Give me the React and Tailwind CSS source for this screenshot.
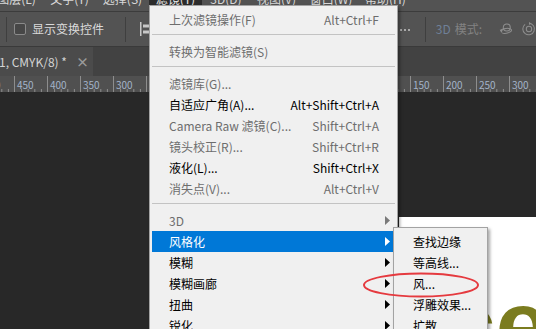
import React from 'react';

const topMenus = [
  { label: '图层(L)', w: 'w-[53px]' },
  { label: '文字(Y)', w: 'w-[53px]' },
  { label: '选择(S)', w: 'w-[53px]' },
  { label: '滤镜(T)', w: 'w-[53px]', open: true },
  { label: '3D(D)', w: 'w-[48px]' },
  { label: '视图(V)', w: 'w-[53px]' },
  { label: '窗口(W)', w: 'w-[56px]' },
  { label: '帮助(H)', w: 'w-[53px]' },
];

const rulerLabels = [500, 450, 400, 350, 300, 250, 200, 150, 100, 50, 0, 50, 100, 150, 200, 250, 300, 350];

const filterItems = [
  { label: '上次滤镜操作(F)', sc: 'Alt+Ctrl+F', dis: true },
  { sep: true },
  { label: '转换为智能滤镜(S)', dis: true },
  { sep: true },
  { label: '滤镜库(G)...', dis: true },
  { label: '自适应广角(A)...', sc: 'Alt+Shift+Ctrl+A' },
  { label: 'Camera Raw 滤镜(C)...', sc: 'Shift+Ctrl+A', dis: true },
  { label: '镜头校正(R)...', sc: 'Shift+Ctrl+R', dis: true },
  { label: '液化(L)...', sc: 'Shift+Ctrl+X' },
  { label: '消失点(V)...', sc: 'Alt+Ctrl+V', dis: true },
  { sep: true },
  { label: '3D', sub: true, dis: true },
  { label: '风格化', sub: true, active: true },
  { label: '模糊', sub: true },
  { label: '模糊画廊', sub: true },
  { label: '扭曲', sub: true },
  { label: '锐化', sub: true },
  { label: '视频', sub: true },
];

const stylizeItems = ['查找边缘', '等高线...', '风...', '浮雕效果...', '扩散...', '拼贴...', '曝光过度'];

const Arrow = ({ color }) => (
  <svg width="5" height="9" viewBox="0 0 5 9">
    <polygon points="0,0 5,4.5 0,9" fill={color} />
  </svg>
);

const MenuRow = ({ item }) => {
  if (item.sep) {
    return (
      <div className="h-[11px] pt-[4px]">
        <div className="h-px bg-[#c3c3c3]" />
      </div>
    );
  }
  const text = item.active ? 'text-white' : item.dis ? 'text-[#6d6d6d]' : 'text-black';
  const arrow = item.active ? '#ffffff' : item.dis ? '#7a7a7a' : '#000000';
  return (
    <div className={`h-[21px] flex items-center ${item.active ? 'bg-[#0078d7]' : ''} ${text}`}>
      <span className="pl-[17px] whitespace-nowrap">{item.label}</span>
      <span className="flex-1" />
      {item.sc && <span className="whitespace-nowrap">{item.sc}</span>}
      <span className="w-[16px] flex justify-center">{item.sub && <Arrow color={arrow} />}</span>
    </div>
  );
};

const RulerSegment = ({ value }) => (
  <div className="relative w-[33px] shrink-0 h-full border-l border-[#8d8d8d]">
    <span className="block pl-[2px] pt-[3px] text-[10px] leading-[12px] text-[#a3b3c8]">{value}</span>
    <svg className="absolute left-0 bottom-0" width="33" height="4" viewBox="0 0 33 4">
      {[6.6, 13.2, 19.8, 26.4].map((x) => (
        <line key={x} x1={x} y1="1" x2={x} y2="4" stroke="#8d8d8d" strokeWidth="1" />
      ))}
    </svg>
  </div>
);

export default function App() {
  return (
    <div className="relative w-[536px] h-[329px] overflow-hidden bg-[#282828] font-['Noto_Sans_CJK_SC',sans-serif] text-[12px] flex flex-col">
      {/* menu bar, mostly scrolled out of view */}
      <div className="h-[11px] shrink-0 bg-[#535353] overflow-hidden">
        <div className="flex -ml-[10px] -translate-y-[13px] h-[21px]">
          {topMenus.map((m) => (
            <div
              key={m.label}
              className={`${m.w} shrink-0 h-[24px] flex items-center justify-center whitespace-nowrap ${m.open ? 'bg-[#2c2c2c] text-[#e8e8e8]' : 'text-[#d8d8d8]'}`}
            >
              {m.label}
            </div>
          ))}
        </div>
      </div>
      <div className="h-px shrink-0 bg-[#3c3c3c]" />

      {/* options bar */}
      <div className="h-[34px] shrink-0 bg-[#535353] flex items-center overflow-hidden">
        <div className="w-[400px] shrink-0 flex items-center">
          <div className="ml-[6px] w-px h-[25px] bg-[#3f3f3f]" />
          <div className="ml-[7px] w-[12px] h-[12px] rounded-[2px] border border-[#8a8a8a] bg-[#474747]" />
          <span className="ml-[6px] text-[#dadada] whitespace-nowrap">显示变换控件</span>
          <div className="ml-[21px] w-px h-[25px] bg-[#3f3f3f]" />
          <svg className="ml-[14px]" width="12" height="16" viewBox="0 0 12 16">
            <rect x="0" y="1" width="1.5" height="14" fill="#c8c8c8" />
            <rect x="3" y="3.5" width="9" height="3" fill="#c8c8c8" />
            <rect x="3" y="9.5" width="6" height="3" fill="#c8c8c8" />
          </svg>
        </div>
        <div className="flex gap-[2px] mt-[2px]">
          <div className="w-[2px] h-[2px] rounded-full bg-[#c4c4c4]" />
          <div className="w-[2px] h-[2px] rounded-full bg-[#c4c4c4]" />
          <div className="w-[2px] h-[2px] rounded-full bg-[#c4c4c4]" />
        </div>
        <div className="ml-[15px] w-px h-[25px] bg-[#3f3f3f]" />
        <span className="ml-[10px] text-[#6f8097] whitespace-nowrap">3D</span>
        <span className="ml-[4px] text-[#828282] whitespace-nowrap">模式:</span>
        <svg className="ml-[17px]" width="18" height="16" viewBox="0 0 18 16">
          <circle cx="10" cy="6" r="4.5" fill="none" stroke="#8e8e8e" strokeWidth="1.3" />
          <path d="M2 10 C 4 7, 14 6, 16 9 C 17 12, 8 15, 4 13" fill="none" stroke="#8e8e8e" strokeWidth="1.3" />
          <polygon points="1,9 5,9 3,13" fill="#8e8e8e" />
        </svg>
        <svg className="ml-[9px]" width="18" height="18" viewBox="0 0 18 18">
          <path d="M4 3 A 7.5 7.5 0 1 0 9 1.5" fill="none" stroke="#8e8e8e" strokeWidth="1.3" />
          <circle cx="9" cy="9" r="3.5" fill="none" stroke="#8e8e8e" strokeWidth="1.3" />
          <polygon points="9,0 12,2 9,4" fill="#8e8e8e" />
        </svg>
      </div>
      <div className="h-px shrink-0 bg-[#3a3a3a]" />

      {/* document tabs */}
      <div className="h-[29px] shrink-0 bg-[#424242] flex">
        <div className="w-[93px] bg-[#4b4b4b] flex items-center">
          <span className="text-[#d4d4d4] whitespace-nowrap -ml-[1px]">1, CMYK/8) *</span>
          <span className="ml-[9px] text-[#9a9a9a] text-[13px] font-bold leading-none">×</span>
        </div>
      </div>

      {/* ruler */}
      <div className="h-[16px] shrink-0 bg-[#505050] flex overflow-hidden">
        <div className="flex -ml-[19px]">
          {rulerLabels.map((v, i) => (
            <RulerSegment key={i} value={v} />
          ))}
        </div>
      </div>

      {/* canvas */}
      <div className="relative flex-1 bg-[#282828]">
        <div className="absolute left-[399px] top-[125px] w-[137px] h-[112px] bg-white overflow-hidden">
          <span className="absolute left-[43px] top-[60px] font-['Liberation_Sans',sans-serif] font-bold text-[96px] leading-none text-[#7b7c1f]">
            ce
          </span>
        </div>
      </div>

      {/* filter menu */}
      <div className="absolute left-[149px] top-[5px] w-[249px] bg-[#f0f0f0] border border-[#a3a3a3] px-[2px] pt-[3px] shadow-[2px_2px_3px_rgba(0,0,0,0.35)]">
        {filterItems.map((item, i) => (
          <MenuRow key={i} item={item} />
        ))}
      </div>

      {/* stylize submenu */}
      <div className="absolute left-[393px] top-[227px] w-[95px] bg-[#f0f0f0] border border-[#a3a3a3] px-[2px] pt-[3px] shadow-[2px_2px_3px_rgba(0,0,0,0.35)]">
        {stylizeItems.map((label) => (
          <MenuRow key={label} item={{ label }} />
        ))}
      </div>

      {/* annotation */}
      <svg className="absolute left-0 top-0 pointer-events-none" width="536" height="329" viewBox="0 0 536 329">
        <ellipse cx="421" cy="285" rx="57" ry="11.5" fill="none" stroke="#e53a3f" strokeWidth="2" />
      </svg>
    </div>
  );
}
